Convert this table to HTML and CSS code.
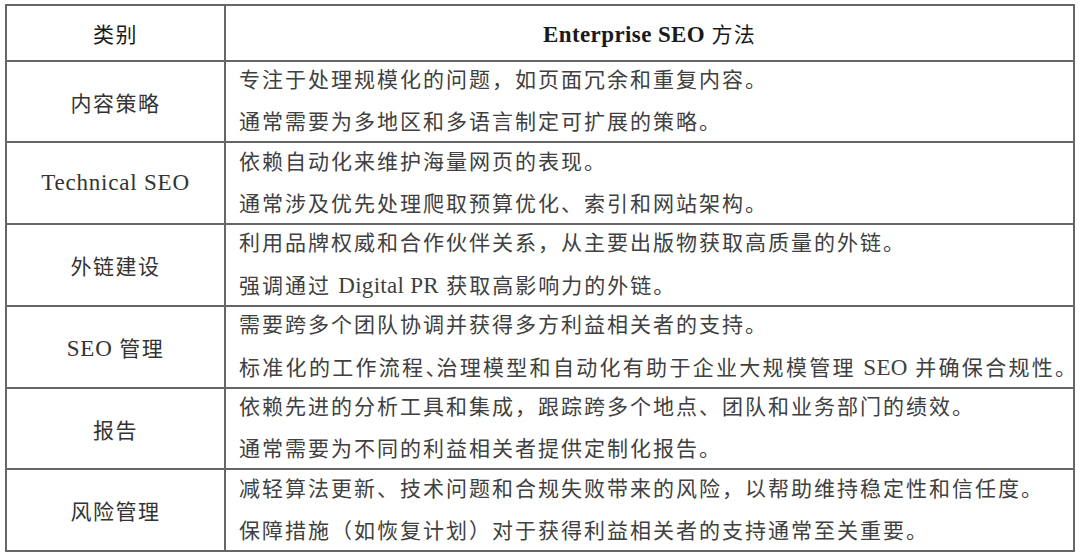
FILE: index.html
```html
<!DOCTYPE html>
<html lang="zh-CN">
<head>
<meta charset="utf-8">
<title>Enterprise SEO 方法</title>
<link rel="stylesheet" href="styles.css">
</head>
<body>
<table class="seo-table">
  <colgroup>
    <col class="col-cat">
    <col class="col-desc">
  </colgroup>
  <thead>
    <tr class="head-row">
      <th class="cat-head">类别</th>
      <th class="desc-head"><b class="latin-bold">Enterprise SEO</b> 方法</th>
    </tr>
  </thead>
  <tbody>
    <tr class="row">
      <td class="cat">内容策略</td>
      <td class="desc">
        <p>专注于处理规模化的问题，如页面冗余和重复内容。</p>
        <p>通常需要为多地区和多语言制定可扩展的策略。</p>
      </td>
    </tr>
    <tr class="row">
      <td class="cat"><span class="en">Technical SEO</span></td>
      <td class="desc">
        <p>依赖自动化来维护海量网页的表现。</p>
        <p>通常涉及优先处理爬取预算优化、索引和网站架构。</p>
      </td>
    </tr>
    <tr class="row">
      <td class="cat">外链建设</td>
      <td class="desc">
        <p>利用品牌权威和合作伙伴关系，从主要出版物获取高质量的外链。</p>
        <p>强调通过 <span class="en">Digital PR</span> 获取高影响力的外链。</p>
      </td>
    </tr>
    <tr class="row">
      <td class="cat"><span class="en">SEO</span> 管理</td>
      <td class="desc">
        <p>需要跨多个团队协调并获得多方利益相关者的支持。</p>
        <p class="tight">标准化的工作流程<span class="narrow">、</span>治理模型和自动化有助于企业大规模管理 <span class="en">SEO</span> 并确保合规性。</p>
      </td>
    </tr>
    <tr class="row">
      <td class="cat">报告</td>
      <td class="desc">
        <p>依赖先进的分析工具和集成，跟踪跨多个地点、团队和业务部门的绩效。</p>
        <p>通常需要为不同的利益相关者提供定制化报告。</p>
      </td>
    </tr>
    <tr class="row">
      <td class="cat">风险管理</td>
      <td class="desc">
        <p>减轻算法更新、技术问题和合规失败带来的风险，以帮助维持稳定性和信任度。</p>
        <p>保障措施（如恢复计划）对于获得利益相关者的支持通常至关重要。</p>
      </td>
    </tr>
  </tbody>
</table>
</body>
</html>
```

FILE: styles.css
```css
html, body {
  margin: 0;
  padding: 0;
  background: #ffffff;
}

body {
  padding: 4px 5px 0 5px;
  font-family: "Liberation Serif", "Noto Sans CJK SC", serif;
  color: #3a3a3a;
}

.seo-table {
  width: 1070px;
  border-collapse: collapse;
  table-layout: fixed;
}

.col-cat {
  width: 219px;
}

.seo-table th,
.seo-table td {
  border: 2px solid #666666;
  padding: 0;
  vertical-align: middle;
}

.head-row {
  height: 56px;
}

.head-row th {
  font-weight: normal;
  font-size: 21px;
  color: #1a1a1a;
  text-align: center;
}

.cat-head {
  letter-spacing: 1.5px;
}

.desc-head {
  letter-spacing: 1.2px;
}

.latin-bold {
  font-weight: bold;
  font-size: 23px;
  letter-spacing: 0.4px;
}

.row {
  height: 81px;
}

.row:nth-child(even) {
  height: 82px;
}

.cat {
  text-align: center;
  font-size: 21px;
  letter-spacing: 1.5px;
  color: #333333;
}

.en {
  font-size: 23px;
  letter-spacing: 0.8px;
}

.desc .en {
  letter-spacing: 0.3px;
}

.desc {
  padding-left: 13px !important;
  font-size: 21px;
  letter-spacing: 2px;
  color: #404040;
}

.desc p {
  margin: 0;
  line-height: 37px;
  white-space: nowrap;
}

.desc p + p {
  margin-top: 5px;
}

.desc p.tight {
  letter-spacing: 2.3px;
}

.narrow {
  letter-spacing: -10px;
}
```
